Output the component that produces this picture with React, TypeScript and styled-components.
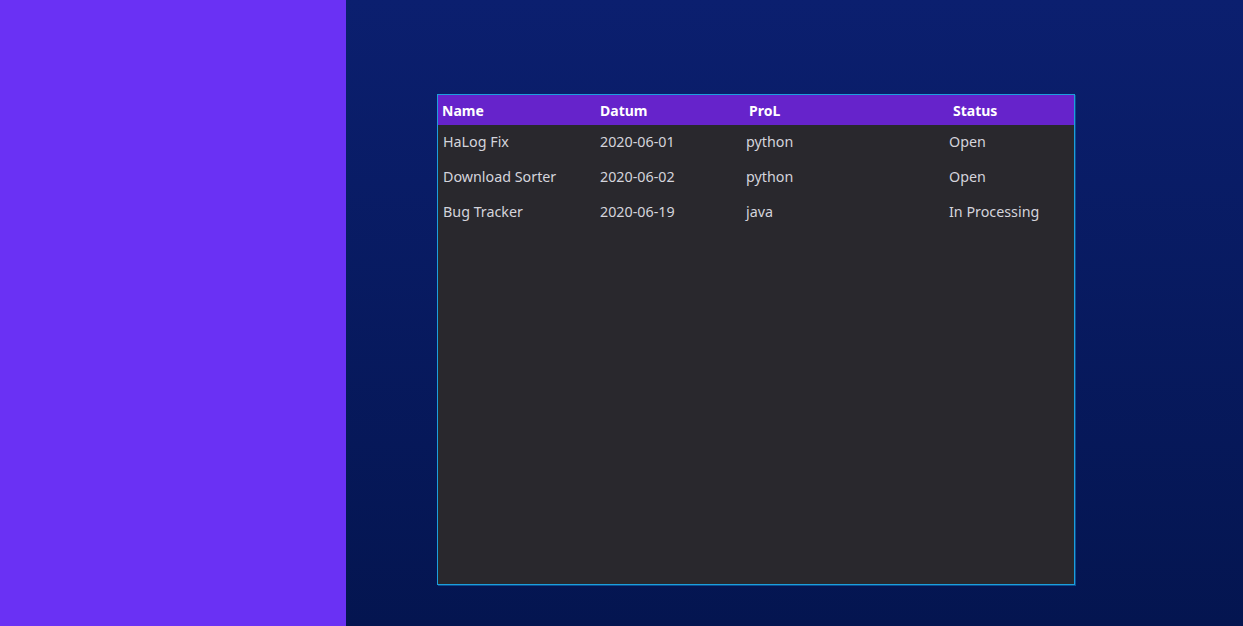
import React from "react";
import styled, { createGlobalStyle } from "styled-components";

const Global = createGlobalStyle`
  html, body { margin: 0; padding: 0; height: 100%; }
  body { font-family: "Noto Sans", "Open Sans", sans-serif; overflow: hidden; }
  #root { height: 100%; }
`;

const Shell = styled.div`
  display: flex;
  width: 1243px;
  height: 626px;
`;

const Sidebar = styled.aside`
  width: 346px;
  flex: none;
  background: #6a31f4;
`;

const Main = styled.main`
  flex: 1;
  background: linear-gradient(180deg, #0b1f6f 0%, #041550 100%);
  padding: 94px 0 0 91px;
  box-sizing: border-box;
`;

const Panel = styled.section`
  width: 638px;
  height: 491px;
  box-sizing: border-box;
  border: 1px solid #1c9fdc;
  box-shadow: 1px 1px 0 #0b4c90;
  background: #29282d;
  display: flex;
  flex-direction: column;
`;

const Grid = styled.div`
  display: grid;
  grid-template-columns: 157px 147px 202px 1fr;
  align-items: center;
`;

const HeaderRow = styled(Grid)`
  height: 30px;
  background: #6623cb;
`;

const Row = styled(Grid)`
  height: 35px;
`;

const HeadCell = styled.div<{ $shift: number }>`
  padding-left: ${(p) => 4 + p.$shift}px;
  color: #ffffff;
  font-weight: 700;
  font-size: 14px;
  white-space: nowrap;
`;

const Cell = styled.div<{ $shift: number }>`
  padding-left: ${(p) => 5 + p.$shift}px;
  padding-bottom: 2px;
  color: #d4d4dc;
  font-size: 14.3px;
  white-space: nowrap;
`;

const headers: [string, number][] = [
  ["Name", 0],
  ["Datum", 1],
  ["ProL", 3],
  ["Status", 5],
];
const cellShift = [0, 0, -1, 0];

const rows = [
  ["HaLog Fix", "2020-06-01", "python", "Open"],
  ["Download Sorter", "2020-06-02", "python", "Open"],
  ["Bug Tracker", "2020-06-19", "java", "In Processing"],
];

export default function App() {
  return (
    <>
      <Global />
      <Shell>
        <Sidebar />
        <Main>
          <Panel>
            <HeaderRow>
              {headers.map(([h, s]) => (
                <HeadCell key={h} $shift={s}>
                  {h}
                </HeadCell>
              ))}
            </HeaderRow>
            {rows.map((r) => (
              <Row key={r[0]}>
                {r.map((c, i) => (
                  <Cell key={i} $shift={cellShift[i]}>
                    {c}
                  </Cell>
                ))}
              </Row>
            ))}
          </Panel>
        </Main>
      </Shell>
    </>
  );
}
